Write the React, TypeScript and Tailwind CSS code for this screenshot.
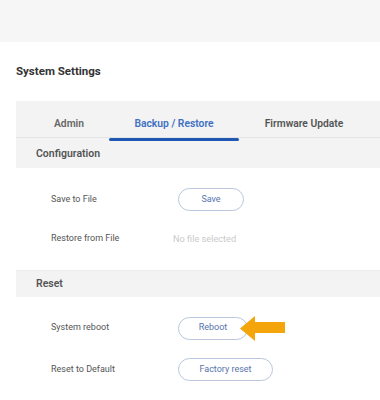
import React from 'react';

const Row: React.FC<{ label: string; children: React.ReactNode; h: string }> = ({ label, children, h }) => (
  <div className={`flex items-center ${h}`}>
    <div className="w-[162px] pl-[35px] text-[9px] text-[#555]">{label}</div>
    <div className="relative flex items-center">{children}</div>
  </div>
);

const PillButton: React.FC<{ label: string; w: string }> = ({ label, w }) => (
  <button className={`h-[23px] ${w} rounded-full border border-[#b9c6de] bg-white text-[9px] text-[#5874ad]`}>
    {label}
  </button>
);

const Arrow = () => (
  <svg className="absolute left-[62px] top-[-2px]" width="46" height="27" viewBox="0 0 46 27">
    <path d="M0 13.5 L15 1 L15 7 L45 7 L45 18 L15 18 L15 26 Z" fill="#f5a50c" />
  </svg>
);

export default function App() {
  const tabs = ['Admin', 'Backup / Restore', 'Firmware Update'];
  return (
    <div className="w-[380px] h-[400px] overflow-hidden bg-white" style={{ fontFamily: 'Roboto, "Liberation Sans", sans-serif' }}>
      <div className="h-[42px] bg-[#f6f6f6]" />
      <div className="pl-4">
        <div className="h-[59px] flex items-center pt-[1px] text-[11.5px] font-bold text-[#333]">System Settings</div>
        <div className="bg-[#f3f3f3]">
          <div className="flex h-[37px] pt-[10px] border-b border-[#e4e4e4]">
            {tabs.map((t, i) => (
              <div
                key={t}
                className={`relative flex items-center justify-center text-[10.3px] font-semibold ${
                  i === 0 ? 'w-[93px] pl-[13px] text-[#666]' : i === 1 ? 'w-[130px] text-[#3d6fc2]' : 'w-[130px] text-[#555]'
                }`}
              >
                {t}
                {i === 1 && <div className="absolute left-0 right-0 bottom-[-4px] h-[3px] rounded-full bg-[#1e58b3]" />}
              </div>
            ))}
          </div>
          <div className="h-[30px] flex items-center pl-5 pt-[1px] text-[10.5px] font-semibold text-[#555]">Configuration</div>
        </div>
        <div className="bg-white">
          <Row label="Save to File" h="h-[60px] pt-[3px]">
            <PillButton label="Save" w="w-[66px]" />
          </Row>
          <Row label="Restore from File" h="h-[24px] -mt-[1px]">
            <span className="-ml-[5px] text-[9.2px] text-[#cacaca]">No file selected</span>
          </Row>
          <div className="h-[19px]" />
        </div>
        <div className="h-[27px] flex items-center pl-5 bg-[#f3f3f3] border-t border-[#ececec] text-[10.5px] font-semibold text-[#555]">
          Reset
        </div>
        <Row label="System reboot" h="h-[59px] pt-[3px]">
          <PillButton label="Reboot" w="w-[70px]" />
          <Arrow />
        </Row>
        <Row label="Reset to Default" h="h-[25px] mt-[1px]">
          <PillButton label="Factory reset" w="w-[95px]" />
        </Row>
      </div>
    </div>
  );
}
